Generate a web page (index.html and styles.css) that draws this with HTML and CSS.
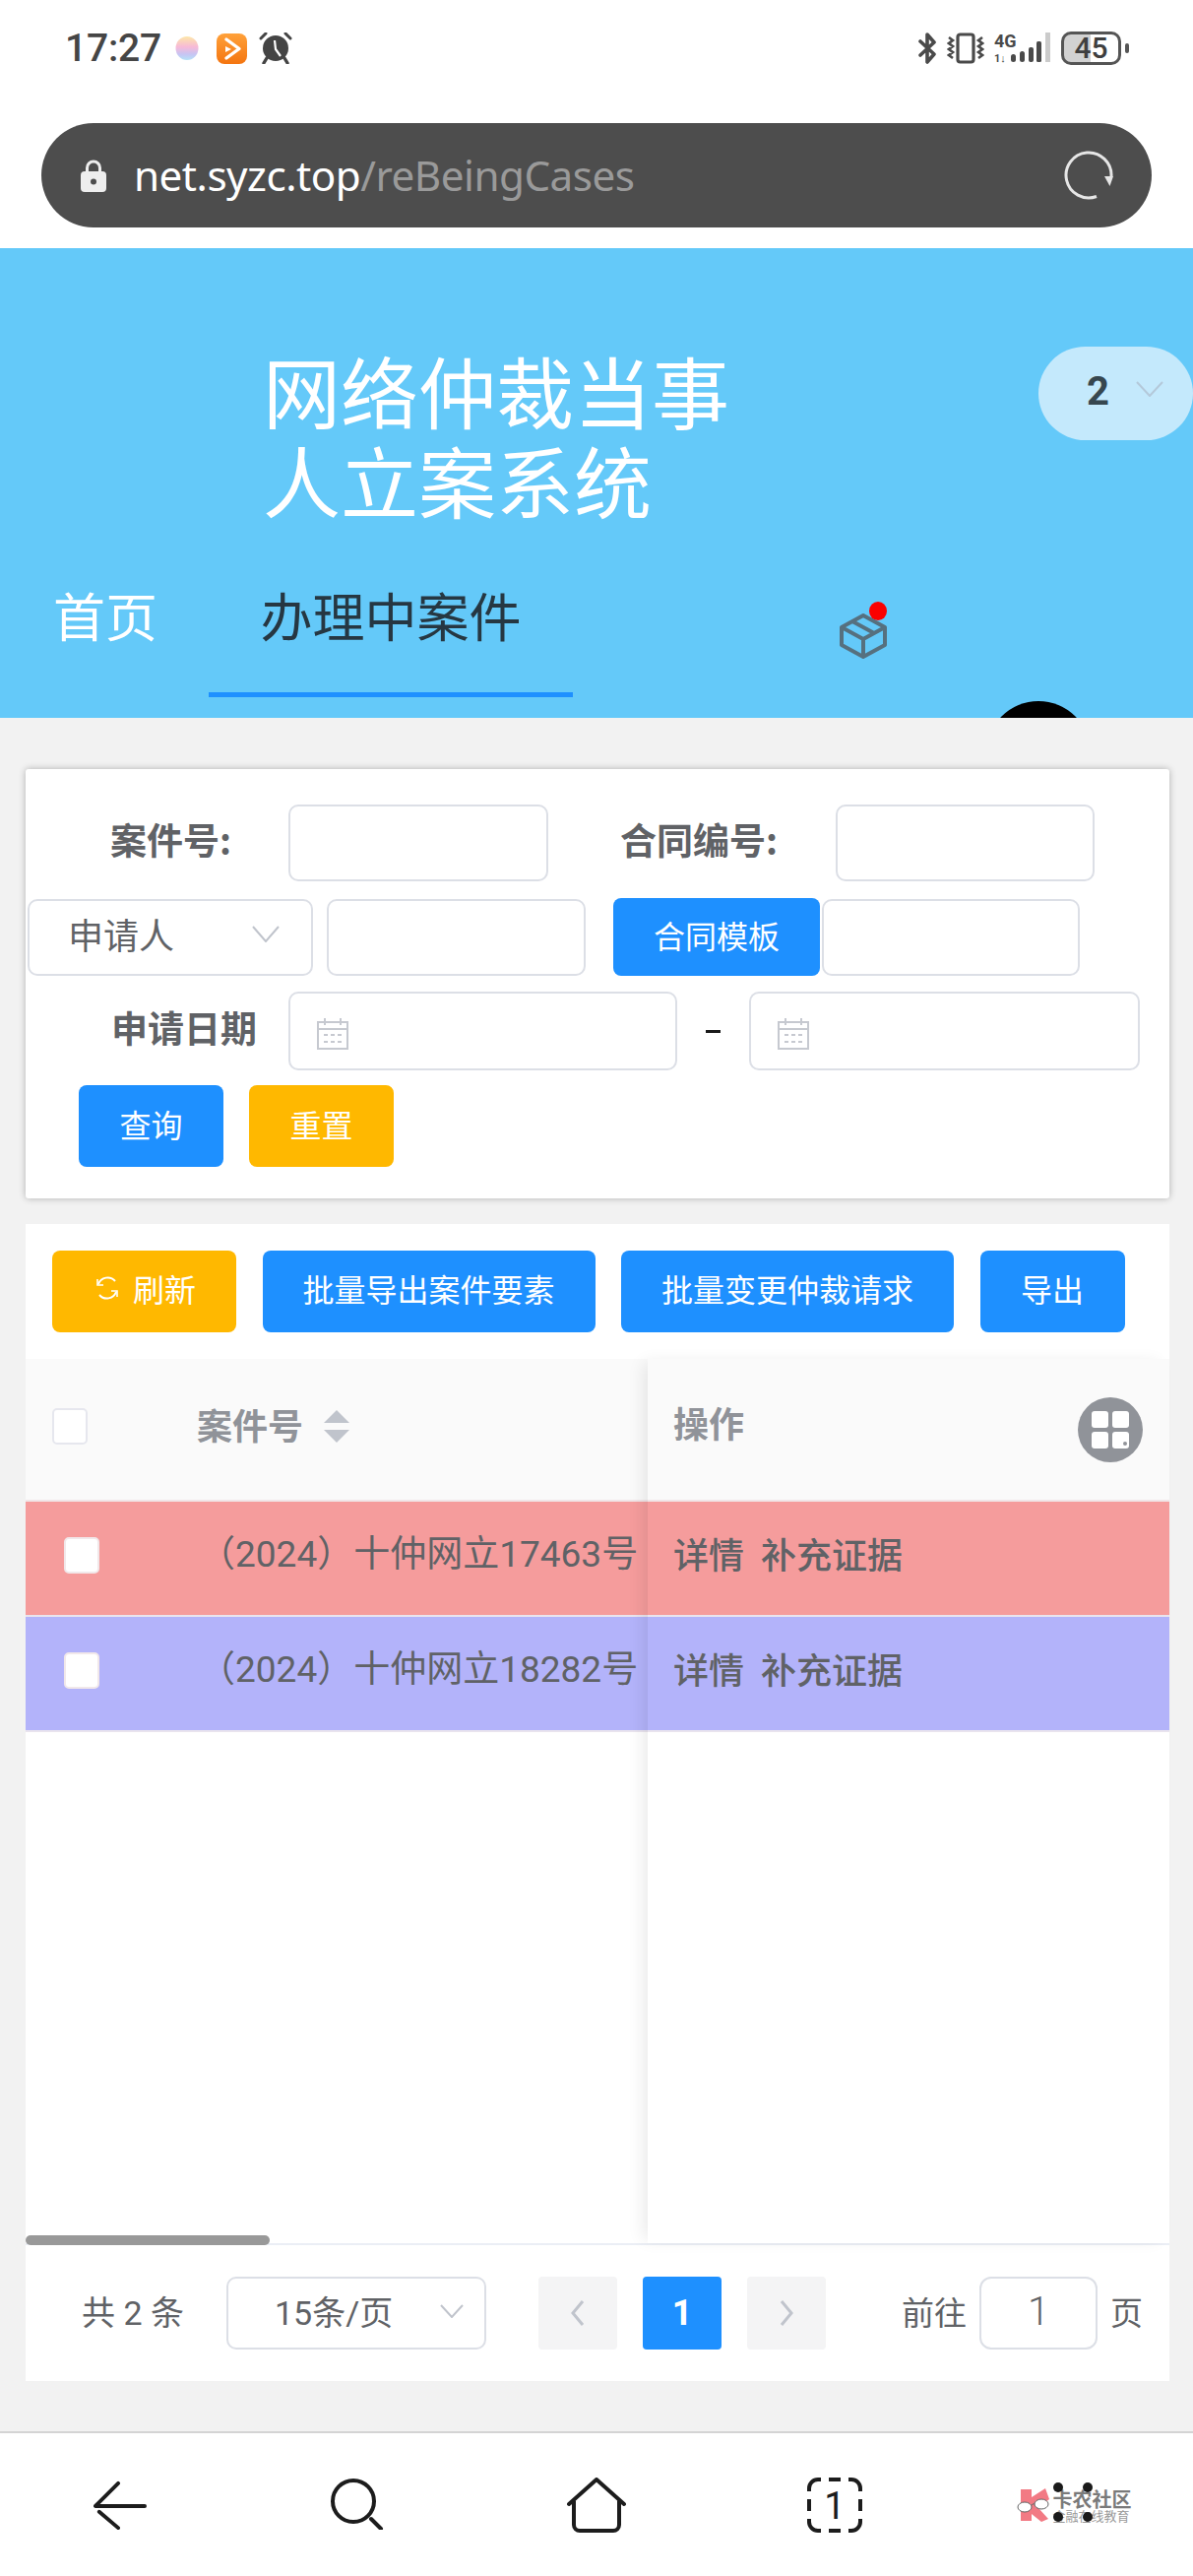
FILE: index.html
```html
<!DOCTYPE html>
<html lang="zh">
<head>
<meta charset="utf-8">
<title>办理中案件</title>
<link rel="stylesheet" href="styles.css">
</head>
<body>
<div class="status">
  <div class="status-left">
    <span class="time">17:27</span>
    <svg class="i-egg" width="24" height="24" viewBox="0 0 24 24"><defs><linearGradient id="egg" x1="0" y1="0" x2="0" y2="1"><stop offset="0" stop-color="#fde7a8"/><stop offset=".45" stop-color="#f7b9d8"/><stop offset=".75" stop-color="#c7c4f3"/><stop offset="1" stop-color="#b5e2f7"/></linearGradient></defs><ellipse cx="12" cy="12" rx="11.5" ry="12" fill="url(#egg)"/></svg>
    <svg class="i-app" width="31" height="31" viewBox="0 0 31 31"><defs><linearGradient id="org" x1="0" y1="0" x2="0" y2="1"><stop offset="0" stop-color="#ffa13a"/><stop offset="1" stop-color="#f47510"/></linearGradient></defs><rect width="31" height="31" rx="8" fill="url(#org)"/><path d="M10 6l13 9.5L10 25" fill="none" stroke="#fff" stroke-width="3.4" stroke-linecap="round" stroke-linejoin="round"/><path d="M9 13l6 3-6 3z" fill="#fff"/></svg>
    <svg class="i-alarm" width="34" height="32" viewBox="0 0 34 32"><circle cx="17" cy="16" r="13" fill="#444"/><path d="M16 8l1 9 5 7" fill="none" stroke="#fff" stroke-width="2.2"/><path d="M2 6l5-5M32 6l-5-5" stroke="#444" stroke-width="3" stroke-linecap="round"/><path d="M8 26l-3 5M26 26l3 5" stroke="#444" stroke-width="3.4" stroke-linecap="round"/></svg>
  </div>
  <div class="status-right">
    <svg class="i-bt" width="18" height="32" viewBox="0 0 18 32"><path d="M2 9l14 13-7 8V2l7 8L2 23" fill="none" stroke="#4a4a4a" stroke-width="3.6" stroke-linejoin="round" stroke-linecap="round"/></svg>
    <svg class="i-vib" width="38" height="32" viewBox="0 0 38 32"><rect x="11" y="2" width="16" height="28" rx="2.5" fill="none" stroke="#4a4a4a" stroke-width="3.2"/><path d="M2 5l4 3-4 3 4 3-4 3 4 3-4 3 4 3M36 5l-4 3 4 3-4 3 4 3-4 3 4 3-4 3" fill="none" stroke="#4a4a4a" stroke-width="2.6"/></svg>
    <svg class="net" width="57" height="40" viewBox="0 -6 57 40"><text class="net-g" x="0" y="15">4G</text><text class="net-s" x="0" y="30">1↓</text><rect x="17" y="22" width="5" height="8" rx="2.500" fill="#4a4a4a"/><rect x="26" y="19" width="5" height="11" rx="2.500" fill="#4a4a4a"/><rect x="35" y="15" width="5" height="15" rx="2" fill="#4a4a4a"/><rect x="43" y="9" width="5" height="21" rx="1.500" fill="#4a4a4a"/><rect x="52" y="0" width="5" height="30" fill="#cbcbcb"/></svg>
    <div class="battery">45</div>
  </div>
</div>

<div class="urlwrap">
  <div class="urlbar">
    <svg class="i-lock" width="26" height="33" viewBox="0 0 26 33"><path d="M6.5 14V8.5a6.5 6.5 0 0 1 13 0V14" fill="none" stroke="#eee" stroke-width="3"/><rect y="12" width="26" height="21" rx="4" fill="#eee"/><circle cx="13" cy="22.5" r="3" fill="#4d4d4d"/></svg>
    <div class="url"><span class="url-host">net.syzc.top</span><span class="url-path">/reBeingCases</span></div>
    <svg class="i-reload" width="52" height="52" viewBox="0 0 52 52"><path d="M34 47.5A23 23 0 1 1 49 27" fill="none" stroke="#e6e6e6" stroke-width="3"/><path d="M42 27h9l-3.500 10z" fill="#e6e6e6"/></svg>
  </div>
</div>

<header class="hero">
  <h1 class="title">网络仲裁当事人立案系统</h1>
  <nav class="tabs">
    <a class="tab tab-home">首页</a>
    <a class="tab tab-active">办理中案件</a>
    <div class="boxicon">
      <svg width="48" height="46" viewBox="0 0 48 46"><path d="M24 2L46 14V32L24 44 2 32V14zM2 14l22 12 22-12M24 26v18M13 8l22 12" fill="none" stroke="#56707f" stroke-width="4" stroke-linejoin="round"/></svg>
      <span class="badge"></span>
    </div>
  </nav>
  <div class="userpill"><span class="userpill-n">2</span><svg width="28" height="16" viewBox="0 0 28 16"><path d="M1 1l13 14L27 1" fill="none" stroke="#b4c9da" stroke-width="2"/></svg></div>
  <div class="blackdot"></div>
</header>

<main class="main">
  <section class="card form">
    <div class="row row1">
      <label class="lbl lbl-case">案件号:</label>
      <div class="inp w264"></div>
      <label class="lbl lbl-contract">合同编号:</label>
      <div class="inp w263"></div>
    </div>
    <div class="row row2">
      <div class="inp sel">申请人<svg class="chev" width="28" height="17" viewBox="0 0 28 17"><path d="M1 1l13 15L27 1" fill="none" stroke="#c0c4cc" stroke-width="2"/></svg></div>
      <div class="inp w263 m14"></div>
      <button class="btn blue btn-tpl">合同模板</button>
      <div class="inp w262 m2"></div>
    </div>
    <div class="row row3">
      <label class="lbl lbl-date">申请日期</label>
      <div class="inp date w395"><svg class="cal" width="32" height="33" viewBox="0 0 32 33"><path d="M1 5h30v27H1zM1 12h30M8 1v7M24 1v7" fill="none" stroke="#c6c9d0" stroke-width="2"/><path d="M7 18h4M14 18h4M21 18h4M7 25h4M14 25h4M21 25h4" stroke="#c6c9d0" stroke-width="2"/></svg></div>
      <span class="dash"></span>
      <div class="inp date w397"><svg class="cal" width="32" height="33" viewBox="0 0 32 33"><path d="M1 5h30v27H1zM1 12h30M8 1v7M24 1v7" fill="none" stroke="#c6c9d0" stroke-width="2"/><path d="M7 18h4M14 18h4M21 18h4M7 25h4M14 25h4M21 25h4" stroke="#c6c9d0" stroke-width="2"/></svg></div>
    </div>
    <div class="row row4">
      <button class="btn blue btn-s">查询</button>
      <button class="btn yellow btn-s">重置</button>
    </div>
  </section>

  <section class="panel">
    <div class="toolbar">
      <button class="btn yellow t1"><svg class="i-refresh" width="24" height="26" viewBox="0 0 24 26"><path d="M3 9a10 10 0 0 1 17-3M21 17a10 10 0 0 1-17 3" fill="none" stroke="#fff" stroke-width="2"/><path d="M2 4v6h6M22 22v-6h-6" fill="none" stroke="#fff" stroke-width="1.600"/></svg>刷新</button>
      <button class="btn blue t2">批量导出案件要素</button>
      <button class="btn blue t2">批量变更仲裁请求</button>
      <button class="btn blue t3">导出</button>
    </div>
    <div class="table">
      <div class="col col-main">
        <div class="th">
          <span class="chk chk-head"></span>
          <span class="th-case">案件号</span>
          <span class="sort"><i class="up"></i><i class="down"></i></span>
        </div>
        <div class="tr pink"><span class="chk"></span><span class="case-no">（2024）十仲网立17463号</span></div>
        <div class="tr violet"><span class="chk"></span><span class="case-no">（2024）十仲网立18282号</span></div>
      </div>
      <div class="col col-fixed">
        <div class="th th-op">
          <span class="th-label">操作</span>
          <span class="gridbtn"><i></i><i></i><i></i><i class="dot"></i></span>
        </div>
        <div class="tr pink op"><span>详情</span><span>补充证据</span></div>
        <div class="tr violet op"><span>详情</span><span>补充证据</span></div>
      </div>
      <div class="scrollbar"></div>
    </div>
    <div class="pager">
      <span class="total">共 2 条</span>
      <div class="inp psize">15条/页<svg class="pchev" width="24" height="14" viewBox="0 0 24 14"><path d="M1 1l11 12L23 1" fill="none" stroke="#c0c4cc" stroke-width="2"/></svg></div>
      <button class="pg pg-prev"><svg width="14" height="28" viewBox="0 0 14 28"><path d="M12 2L2 14l10 12" fill="none" stroke="#c0c4cc" stroke-width="3"/></svg></button>
      <button class="pg pg-on">1</button>
      <button class="pg pg-next"><svg width="14" height="28" viewBox="0 0 14 28"><path d="M2 2l10 12L2 26" fill="none" stroke="#c0c4cc" stroke-width="3"/></svg></button>
      <span class="goto">前往</span>
      <div class="inp jump">1</div>
      <span class="pg-unit">页</span>
    </div>
  </section>
</main>

<footer class="bottom">
  <div class="nav-cell">
    <svg class="i-back" width="54" height="50" viewBox="0 0 56 50"><path d="M26 2L2 26h52M6 32l20 17" fill="none" stroke="#1c1c1c" stroke-width="4" stroke-linecap="round" stroke-linejoin="round"/></svg>
  </div>
  <div class="nav-cell">
    <svg class="i-search" width="54" height="52" viewBox="0 0 54 52"><ellipse cx="23" cy="23" rx="21" ry="21" fill="none" stroke="#1c1c1c" stroke-width="4"/><path d="M41 41l10 10" stroke="#1c1c1c" stroke-width="4" stroke-linecap="round"/></svg>
  </div>
  <div class="nav-cell">
    <svg width="60" height="56" viewBox="0 0 60 56"><path d="M2 27L30 2l28 25M7 24v24a6 6 0 0 0 6 6h34a6 6 0 0 0 6-6V24" fill="none" stroke="#1c1c1c" stroke-width="4" stroke-linecap="round" stroke-linejoin="round"/></svg>
  </div>
  <div class="nav-cell">
    <svg width="56" height="56" viewBox="0 0 56 56"><path d="M2 14V11a9 9 0 0 1 9-9h3M42 2h3a9 9 0 0 1 9 9v3M54 42v3a9 9 0 0 1-9 9h-3M14 54h-3a9 9 0 0 1-9-9v-3M22 2h12M22 54h12M2 22v12M54 22v12" fill="none" stroke="#1c1c1c" stroke-width="4"/><text x="28" y="42" text-anchor="middle" class="tabcount">1</text></svg>
  </div>
  <div class="nav-cell logo">
    <svg class="logo-mark" width="36" height="36" viewBox="0 0 36 36"><path d="M4 1h11v8L29 0l4 11-11 9 10 11-7 3-10-8v7H4z" fill="#f27a84"/><path d="M15 17q2-2 3-1" fill="none" stroke="#666" stroke-width="1"/><ellipse cx="8" cy="19" rx="7" ry="5" fill="#fff" stroke="#666" stroke-width="1"/><ellipse cx="25" cy="16" rx="7" ry="5" fill="#fff" stroke="#666" stroke-width="1"/></svg>
    <div class="logo-text"><span class="logo-a">卡农社区</span><span class="logo-b">金融在线教育</span></div>
    <i class="wm w1"></i><i class="wm w2"></i><i class="wm w3"></i><i class="wm w4"></i>
  </div>
</footer>
</body>
</html>
```

FILE: styles.css
```css
* { box-sizing: border-box; }
html, body { margin: 0; padding: 0; }
body {
  width: 1212px;
  height: 2616px;
  overflow: hidden;
  background: #f2f2f2;
  font-family: Roboto, "Noto Sans CJK SC", sans-serif;
  color: #606266;
}
button { font-family: inherit; border: 0; padding: 0; }

/* status bar */
.status {
  height: 125px;
  background: #fff;
  display: flex;
  justify-content: space-between;
  align-items: center;
  padding: 0 67px 27px 66px;
}
.status-left, .status-right { display: flex; align-items: center; }
.time { font-size: 39px; font-weight: 500; color: #454545; width: 96px; line-height: 40px; letter-spacing: -.2px; }
.i-egg { margin-left: 16px; }
.i-app { margin-left: 18px; }
.i-alarm { margin-left: 12px; }
.i-vib { margin-left: 11px; }
.net { margin: 0 0 4px 10px; flex: none; }
.net-g { font-family: Roboto, sans-serif; font-size: 18px; font-weight: 700; fill: #4a4a4a; }
.net-s { font-family: Roboto, sans-serif; font-size: 11px; font-weight: 700; fill: #4a4a4a; }
.battery {
  position: relative;
  margin: 0 6px 0 11px;
  width: 61px;
  height: 34px;
  border: 3px solid #555;
  border-radius: 10px;
  background: linear-gradient(90deg, #d2d2d2 49%, #fff 49%);
  color: #3f3f3f;
  font-size: 30px;
  font-weight: 500;
  line-height: 28px;
  text-align: center;
}
.battery::after {
  content: "";
  position: absolute;
  right: -11px;
  top: 9px;
  width: 4px;
  height: 10px;
  border-radius: 2px;
  background: #555;
}

/* url bar */
.urlwrap { height: 127px; background: #fff; padding: 0 42px; }
.urlbar {
  height: 106px;
  border-radius: 53px;
  background: #4d4d4d;
  display: flex;
  align-items: center;
  padding: 0 38px 0 40px;
}
.url { margin-left: 28px; flex: 1; font-family: "Noto Sans", sans-serif; font-size: 42.2px; line-height: 60px; letter-spacing: -.5px; white-space: nowrap; }
.url-host { color: #fff; }
.url-path { color: #9a9a9a; }

/* header */
.hero {
  position: relative;
  height: 477px;
  background: #64c9f9;
  overflow: hidden;
}
.title {
  margin: 0;
  padding: 98px 0 0 267px;
  width: 750px;
  color: #fff;
  font-family: "Noto Sans CJK SC", sans-serif;
  font-size: 79px;
  font-weight: 400;
  line-height: 91px;
}
.tabs { display: flex; align-items: flex-start; margin-top: 14px; padding-left: 54px; font-size: 53px; font-family: "Noto Sans CJK SC", sans-serif; }
.tab { height: 162px; display: flex; align-items: center; padding-bottom: 1px; }
.tab-home { width: 158px; color: #fff; border-bottom: 5px solid transparent; }
.tab-active { width: 370px; justify-content: center; color: #263742; border-bottom: 5px solid #1e90ff; }
.boxicon { position: relative; margin: 77px 0 0 271px; width: 48px; height: 46px; display: flex; }
.badge { position: absolute; right: 0; top: -12px; width: 18px; height: 19px; border-radius: 50%; background: #fb0000; }
.userpill {
  position: absolute;
  right: 0;
  top: 100px;
  width: 157px;
  height: 95px;
  border-radius: 48px;
  background: #c4e9fc;
  display: flex;
  align-items: center;
  padding-left: 49px;
}
.userpill-n { font-size: 40px; font-weight: 700; color: #37474f; width: 50px; margin-top: -4px; font-family: Roboto, sans-serif; }
.userpill svg { margin-top: -10px; }
.blackdot { position: absolute; left: 1002px; top: 460px; width: 106px; height: 106px; border-radius: 50%; background: #000; }

/* main */
.main { padding: 52px 24px 51px 26px; }
.card { background: #fff; border-radius: 3px; box-shadow: 0 0 7px rgba(0, 0, 0, .28); }
.form { height: 436px; padding: 36px 0 0 2px; }
.row { display: flex; align-items: center; }
.row2 { margin-top: 17px; }
.row3 { margin-top: 16px; }
.row4 { margin-top: 15px; padding-left: 52px; gap: 26px; }
.lbl { font-size: 37px; font-weight: 700; font-family: "Noto Sans CJK SC", sans-serif; color: #606266; white-space: nowrap; line-height: 50px; padding-bottom: 8px; }
.lbl-case { width: 265px; padding-left: 84px; }
.lbl-contract { width: 292px; padding-left: 73px; }
.lbl-date { width: 265px; padding-left: 85px; }
.inp { height: 78px; background: #fff; border: 2px solid #dcdfe6; border-radius: 10px; flex: none; }
.w262 { width: 262px; }
.w263 { width: 263px; }
.w264 { width: 264px; }
.w395 { width: 395px; }
.w397 { width: 397px; }
.m14 { margin-left: 14px; }
.m2 { margin-left: 2px; }
.sel { width: 290px; display: flex; align-items: center; justify-content: space-between; padding: 0 32px 8px 39px; font-size: 36px; font-family: "Noto Sans CJK SC", sans-serif; }
.chev { margin-top: 2px; }
.date { height: 80px; display: flex; align-items: center; padding-left: 27px; }
.cal { margin-top: 4px; }
.dash { width: 73px; display: flex; justify-content: center; }
.dash::before { content: ""; width: 15px; height: 3px; background: #1a1a1a; }
.btn { color: #fff; font-size: 32px; font-family: "Noto Sans CJK SC", sans-serif; border-radius: 8px; flex: none; display: flex; align-items: center; justify-content: center; padding-bottom: 6px; }
.blue { background: #1e90ff; }
.yellow { background: #ffb800; }
.btn-tpl { width: 210px; height: 79px; margin-left: 28px; }
.btn-s { width: 147px; height: 83px; }

/* table panel */
.panel { margin-top: 26px; background: #fff; }
.toolbar { display: flex; gap: 26.5px; padding: 27px 0 27px 27px; }
.toolbar .btn { height: 83px; padding-bottom: 8px; }
.toolbar .t1 { padding-left: 3px; }
.t1 { width: 187px; }
.t2 { width: 338px; }
.t3 { width: 147px; }
.i-refresh { margin-right: 14px; }
.table { position: relative; display: flex; height: 900px; border-bottom: 2px solid #ebeef5; }
.col { display: flex; flex-direction: column; }
.col-main { width: 632px; }
.col-fixed { width: 530px; position: relative; box-shadow: -8px 0 16px -4px rgba(0, 0, 0, .09); }
.th { height: 145px; background: #fafafa; border-bottom: 2px solid #f1e6e8; display: flex; align-items: center; font-size: 36px; font-weight: 700; color: #909399; font-family: "Noto Sans CJK SC", sans-serif; padding-bottom: 7px; }
.chk { width: 36px; height: 37px; flex: none; background: #fff; border: 2px solid #e6e7ee; border-radius: 5px; }
.chk-head { margin-left: 27px; }
.th-case { margin-left: 111px; margin-top: -4px; line-height: 50px; }
.sort { margin-left: 21px; width: 26px; display: flex; flex-direction: column; gap: 7px; }
.sort i { width: 0; height: 0; border-left: 13px solid transparent; border-right: 13px solid transparent; }
.sort .up { border-bottom: 13px solid #c0c4cc; }
.sort .down { border-top: 13px solid #c0c4cc; }
.tr { height: 117px; display: flex; align-items: center; border-bottom: 2px solid #e9e4ee; font-size: 37px; padding-bottom: 7px; }
.tr .chk { margin-left: 39px; border-color: #f1e8ea; }
.pink { background: #f59c9c; }
.violet { background: #b3b3fa; }
.case-no { margin-left: 101px; white-space: nowrap; line-height: 50px; }
.th-op { justify-content: space-between; padding: 0 27px 7px 26px; }
.th-label { margin-top: -8px; line-height: 50px; }
.gridbtn { width: 66px; height: 66px; margin-top: 7px; border-radius: 50%; background: #909399; display: grid; grid-template-columns: 17px 17px; grid-auto-rows: 17px; gap: 4px; align-content: center; justify-content: center; }
.gridbtn i { position: relative; background: #fff; border-radius: 3px; display: block; }
.gridbtn .dot::after { content: ""; position: absolute; right: 2px; bottom: 3px; width: 4px; height: 4px; border-radius: 50%; background: #909399; }
.tr.op { padding: 0 0 12px 26px; font-size: 36px; font-weight: 500; font-family: "Noto Sans CJK SC", sans-serif; gap: 17px; line-height: 50px; }
.scrollbar { position: absolute; left: 0; bottom: -2px; width: 248px; height: 10px; border-radius: 5px; background: #999; }

/* pagination */
.pager { height: 138px; display: flex; align-items: center; padding-left: 57px; font-size: 33px; font-family: Roboto, "Noto Sans CJK SC", sans-serif; }
.total { width: 147px; white-space: nowrap; font-size: 34px; padding-bottom: 5px; }
.psize { width: 264px; height: 74px; display: flex; align-items: center; padding: 0 0 5px 47px; position: relative; font-size: 34px; }
.pchev { position: absolute; right: 21px; top: 26px; }
.pg { width: 80px; height: 74px; border-radius: 4px; background: #f4f4f5; display: flex; align-items: center; justify-content: center; }
.pg-prev { margin-left: 53px; }
.pg-on { margin-left: 26px; background: #1e90ff; color: #fff; font-size: 36px; font-weight: 700; }
.pg-next { margin-left: 26px; }
.goto { margin-left: 77px; width: 79px; white-space: nowrap; padding-bottom: 5px; }
.jump { width: 120px; height: 74px; display: flex; align-items: center; justify-content: center; font-size: 40px; font-weight: 300; border-radius: 12px; padding-bottom: 4px; }
.pg-unit { margin-left: 13px; padding-bottom: 5px; }

/* bottom nav */
.bottom { height: 147px; background: #fff; border-top: 2px solid #d4d4d4; display: grid; grid-template-columns: repeat(5, 1fr); }
.nav-cell { display: flex; align-items: center; justify-content: center; position: relative; }
.i-back { margin-left: 1px; }
.i-search { margin-left: -2px; margin-top: -2px; }
.tabcount { font-family: Roboto, sans-serif; font-size: 38px; fill: #1c1c1c; }
.logo { justify-content: flex-start; padding-left: 63px; }
.logo-mark { flex: none; margin-top: 2px; }
.logo-text { display: flex; flex-direction: column; margin-left: 1px; margin-top: 4px; font-family: Roboto, "Noto Sans CJK SC", sans-serif; color: #7a7a7a; white-space: nowrap; }
.logo-a { font-size: 20px; line-height: 20px; font-weight: 700; }
.logo-b { font-size: 13px; line-height: 13px; color: #9a9a9a; }
.wm { position: absolute; width: 10px; height: 10px; border-radius: 50%; background: #1a1a1a; }
.w1 { left: 100px; top: 50px; }
.w2 { left: 130px; top: 50px; }
.w3 { left: 100px; top: 80px; }
.w4 { left: 130px; top: 80px; }
```
